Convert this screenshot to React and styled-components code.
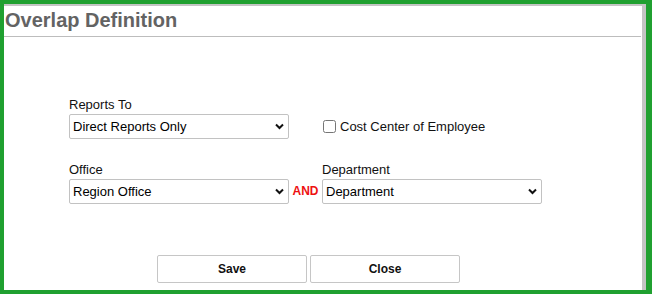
import React from 'react';
import styled, { createGlobalStyle } from 'styled-components';

const GlobalStyle = createGlobalStyle`
  html, body {
    margin: 0;
    padding: 0;
    background: #20a030;
    font-family: "Liberation Sans", Arial, sans-serif;
  }
`;

const Frame = styled.div`
  margin: 4px 6px 4px 4px;
  height: 286px;
  box-sizing: border-box;
  background: #fff;
  border-top: 2px solid #c4c4c4;
  border-right: 4px solid #c4c4c4;
  display: flex;
  flex-direction: column;
`;

const Header = styled.div`
  padding: 3px 0 4px 1px;
  border-bottom: 1px solid #bdbdbd;
  margin-right: 1px;
`;

const Title = styled.h1`
  margin: 0;
  font-size: 20px;
  line-height: 23px;
  font-weight: bold;
  color: #636363;
`;

const Form = styled.div`
  padding: 60px 0 0 65px;
  display: flex;
  flex-direction: column;
  gap: 23px;
`;

const Row = styled.div`
  display: flex;
  align-items: flex-end;
`;

const Field = styled.div`
  display: flex;
  flex-direction: column;
  gap: 1px;
`;

const Label = styled.label`
  font-size: 13px;
  line-height: 16px;
  color: #111;
`;

const SelectWrap = styled.div`
  position: relative;
  width: 220px;
  height: 25px;
`;

const Select = styled.select`
  appearance: none;
  -webkit-appearance: none;
  width: 100%;
  height: 100%;
  box-sizing: border-box;
  border: 1px solid #c2c2c2;
  border-radius: 2px;
  background: #fff;
  padding: 0 20px 0 3px;
  font-family: "Liberation Sans", Arial, sans-serif;
  font-size: 13px;
  color: #000;
  outline: none;
`;

const Chevron = styled.svg`
  position: absolute;
  right: 5px;
  top: 9px;
  pointer-events: none;
`;

const Gap = styled.div`
  width: ${p => p.$w}px;
  flex: none;
`;

const AndText = styled.span`
  width: 33px;
  height: 25px;
  line-height: 25px;
  text-align: center;
  font-size: 12px;
  font-weight: bold;
  color: #ee1111;
`;

const CheckRow = styled.label`
  height: 25px;
  display: flex;
  align-items: center;
  font-size: 13px;
  color: #111;
`;

const Check = styled.input`
  width: 13px;
  height: 13px;
  margin: 0 4px 0 1px;
`;

const ButtonBar = styled.div`
  display: flex;
  gap: 3px;
  padding: 51px 0 0 153px;
`;

const Button = styled.button`
  width: 150px;
  height: 28px;
  box-sizing: border-box;
  background: #fff;
  border: 1px solid #c6c6c6;
  border-radius: 2px;
  font-family: "Liberation Sans", Arial, sans-serif;
  font-size: 12px;
  font-weight: bold;
  color: #111;
  cursor: pointer;
`;

const Dropdown = ({ value }) => (
  <SelectWrap>
    <Select defaultValue={value}>
      <option>{value}</option>
    </Select>
    <Chevron width="9" height="7" viewBox="0 0 9 7">
      <polyline points="1,1.5 4.5,5 8,1.5" fill="none" stroke="#111" strokeWidth="2" />
    </Chevron>
  </SelectWrap>
);

export default function App() {
  return (
    <>
      <GlobalStyle />
      <Frame>
        <Header>
          <Title>Overlap Definition</Title>
        </Header>
        <Form>
          <Row>
            <Field>
              <Label>Reports To</Label>
              <Dropdown value="Direct Reports Only" />
            </Field>
            <Gap $w={33} />
            <CheckRow>
              <Check type="checkbox" />
              Cost Center of Employee
            </CheckRow>
          </Row>
          <Row>
            <Field>
              <Label>Office</Label>
              <Dropdown value="Region Office" />
            </Field>
            <AndText>AND</AndText>
            <Field>
              <Label>Department</Label>
              <Dropdown value="Department" />
            </Field>
          </Row>
        </Form>
        <ButtonBar>
          <Button>Save</Button>
          <Button>Close</Button>
        </ButtonBar>
      </Frame>
    </>
  );
}
